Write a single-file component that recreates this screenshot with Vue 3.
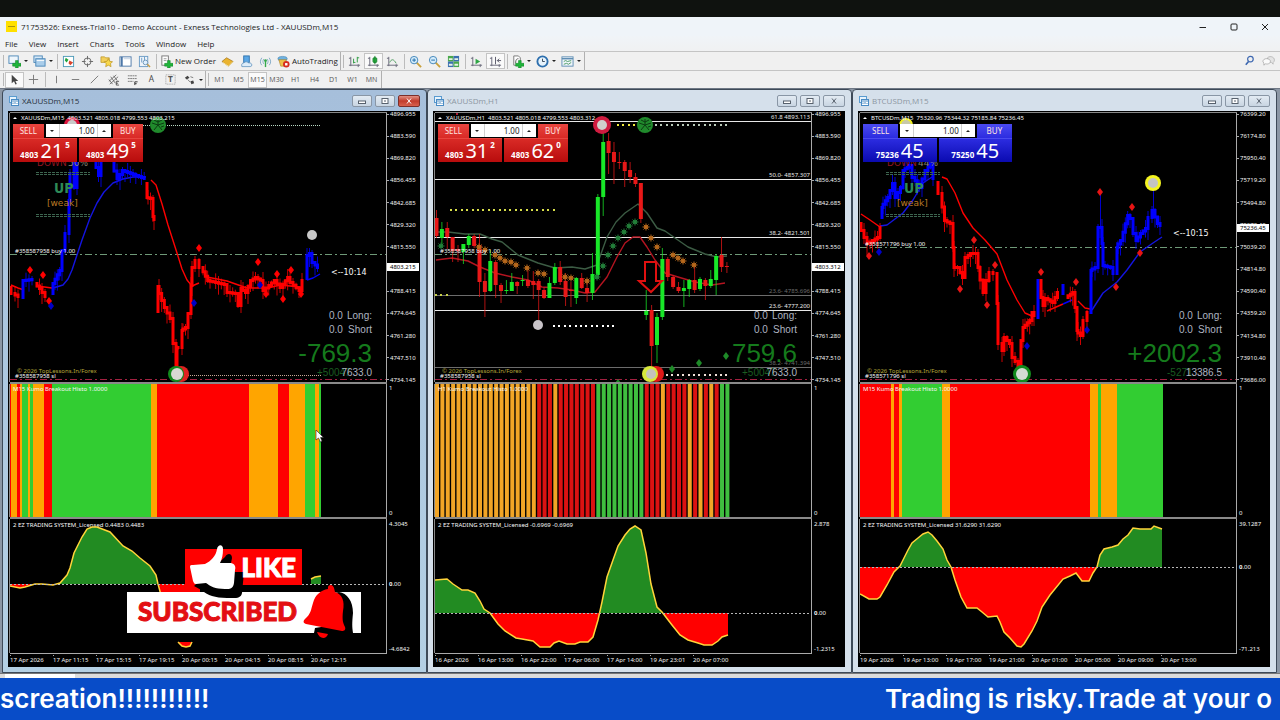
<template>
  <div class="desktop">
    <div class="letterbox"></div>

    <!-- application frame -->
    <header class="title-bar">
      <span class="app-icon"><i></i></span>
      <h1 class="app-title">71753526: Exness-Trial10 - Demo Account - Exness Technologies Ltd - XAUUSDm,M15</h1>
      <div class="frame-controls">
        <button aria-label="Minimize"><svg viewBox="0 0 10 10"><path d="M1.5 5.5H8" /></svg></button>
        <button aria-label="Maximize"><svg viewBox="0 0 10 10"><rect x="2" y="2" width="6" height="6" rx="1" /></svg></button>
        <button aria-label="Close"><svg viewBox="0 0 10 10"><path d="M2 2L8 8M8 2L2 8" /></svg></button>
      </div>
    </header>

    <nav class="menu-bar">
      <button v-for="item in menus" :key="item">{{ item }}</button>
    </nav>

    <div class="toolbar-row">
      <div v-for="(group, g) in mainTools" :key="g" class="toolbar">
        <template v-for="(tool, t) in group" :key="t">
          <i v-if="tool === '|'" class="divider"></i>
          <button
            v-else
            class="tool"
            :class="{ pressed: tool.pressed, drop: tool.drop, wide: tool.text }"
            :aria-label="tool.text || tool.icon"
          >
            <svg viewBox="0 0 14 14" v-html="icons[tool.icon]"></svg>
            <span v-if="tool.text">{{ tool.text }}</span>
            <i v-if="tool.drop" class="caret"></i>
          </button>
        </template>
      </div>
      <div class="toolbar-end">
        <button class="tool" aria-label="Search"><svg viewBox="0 0 14 14" v-html="icons.search"></svg></button>
        <button class="tool" aria-label="Chat"><svg viewBox="0 0 14 14" v-html="icons.chat"></svg></button>
      </div>
    </div>

    <div class="toolbar-row second">
      <div class="toolbar">
        <template v-for="(tool, t) in lineTools" :key="t">
          <i v-if="tool === '|'" class="divider"></i>
          <button v-else class="tool" :class="{ pressed: tool.pressed, drop: tool.drop }" :aria-label="tool.icon">
            <svg viewBox="0 0 14 14" v-html="icons[tool.icon]"></svg>
            <i v-if="tool.drop" class="caret"></i>
          </button>
        </template>
      </div>
      <div class="toolbar">
        <button v-for="p in periods" :key="p" class="tool period" :class="{ pressed: p === 'M15' }">{{ p }}</button>
      </div>
    </div>

    <!-- chart windows -->
    <main class="workspace">
      <section v-for="w in charts" :key="w.id" class="mdi" :class="{ active: w.active }">
        <div class="mdi-title">
          <svg class="mdi-icon" viewBox="0 0 10 10">
            <rect x="0.5" y="0.5" width="7" height="6" fill="#e8f4fd" stroke="#5a9bd0" />
            <rect x="2.5" y="3.5" width="7" height="6" fill="#fff" stroke="#4a8bc4" />
            <path d="M3 5H9M4 8V6.500M6 8V6M8 8V7" stroke="#4a8bc4" fill="none" />
          </svg>
          <h2>{{ w.symbol }},{{ w.period }}</h2>
          <div class="mdi-controls">
            <button aria-label="Minimize"><svg viewBox="0 0 10 8"><rect x="1.5" y="4" width="7" height="2.500" /></svg></button>
            <button aria-label="Restore"><svg viewBox="0 0 10 8"><rect x="2" y="1.500" width="6" height="5" /><path d="M4 4H6" /></svg></button>
            <button class="close" aria-label="Close"><svg viewBox="0 0 10 8"><path d="M3 1.500L7 6.500M7 1.500L3 6.500" /></svg></button>
          </div>
        </div>

        <div class="chart">
          <div class="plot price-plot">
            <svg class="canvas">
              <template v-if="w.levels">
                <g v-for="(l, i) in w.levels" :key="'l' + i">
                  <line x1="0" x2="100%" :y1="l.y" :y2="l.y" :stroke="l.color" />
                  <text x="375" :y="l.y - 2" text-anchor="end" :fill="l.color">{{ l.text }}</text>
                </g>
              </template>
              <line x1="0" x2="100%" :y1="w.buyY" :y2="w.buyY" stroke="#6f9a78" stroke-dasharray="7 3 2 3" />
              <line x1="0" x2="100%" y1="266" y2="266" stroke="#a32040" stroke-dasharray="7 3 2 3" />
              <line
                v-for="(d, i) in w.dots"
                :key="'d' + i"
                :x1="d.from" :x2="d.to" :y1="d.y" :y2="d.y"
                :stroke="d.color" :stroke-width="d.dash === '1 1' ? 1 : 2" :stroke-dasharray="d.dash"
              />

              <path
                v-for="(m, i) in w.averages" :key="'m' + i"
                :d="'M' + m.pts" :stroke="m.color" stroke-width="1.400" fill="none" stroke-linejoin="round"
              />

              <!-- M15 bars are traced from the price path -->
              <g v-for="(b, i) in w.bars" :key="'b' + i" :stroke="b.color">
                <path :d="b.wicks" opacity="0.8" />
                <path :d="b.bodies" stroke-width="3" />
              </g>

              <g v-for="(c, i) in w.candles" :key="'c' + i" :fill="c.color">
                <rect :x="c.x" :y="c.high" width="1" :height="c.low - c.high" opacity="0.75" />
                <rect :x="c.x - 1.500" :y="c.top" width="4" :height="Math.max(c.bottom - c.top, 1)" />
              </g>

              <g v-for="(f, i) in w.flowers" :key="'f' + i" :transform="`translate(${f.x} ${f.y})`" :stroke="f.color" fill="none">
                <circle r="1.500" />
                <path d="M0-3.500V3.500M-3.500 0H3.500M-2.500-2.500L2.500 2.500M2.500-2.500L-2.500 2.500" />
              </g>

              <path
                v-for="(a, i) in w.marks" :key="'a' + i"
                :d="`M${a.x} ${a.y - 4}l3 4l-3 4l-3 -4z`" :fill="a.color"
              />
              <path v-if="w.arrow" :d="w.arrow" fill="none" stroke="#e01010" stroke-width="2" />

              <g v-for="(o, i) in w.rings" :key="'o' + i">
                <circle :cx="o.x" :cy="o.y" :r="o.r" :fill="o.color" />
                <g v-if="o.star" stroke="#0c3c12" fill="none" :transform="`translate(${o.x} ${o.y})`">
                  <path d="M0 0V-6M0 0L6-2M0 0L4 5M0 0L-4 5M0 0L-6-2M-4-5L0-3L4-5M6 1L3 2" />
                </g>
              </g>

              <path d="M3 6H7L5 4Z" fill="#fff" />
              <text x="11" y="7">{{ w.symbol }},{{ w.period }}&nbsp; {{ w.ohlc }}</text>
              <text x="5" :y="w.buyY - 1">#{{ w.ticket }} buy 1.00</text>
              <text x="7" y="260" fill="#b7a93a">© 2026 TopLessons.In/Forex</text>
              <text x="5" y="265">#{{ w.ticket }} sl</text>

              <template v-if="w.trend">
                <text class="verdana" x="27" y="53" fill="#8f1520">DOWN</text>
                <text class="verdana" x="58" y="53" fill="#8c8470">{{ w.trend }}</text>
                <line v-for="y in [59, 61, 101, 103]" :key="y" x1="26" x2="80" :y1="y" :y2="y" stroke="#3d6650" stroke-dasharray="3 1" />
                <text class="up" x="44" y="80">UP</text>
                <text class="verdana" x="37" y="93" fill="#bd7b25">[weak]</text>
              </template>
              <text v-if="w.timer" class="timer" :x="w.timer.x" :y="w.timer.y">{{ w.timer.text }}</text>

              <text class="stat" x="319" y="206">0.0</text>
              <text class="stat" x="362" y="206" text-anchor="end">Long:</text>
              <text class="stat" x="319" y="220">0.0</text>
              <text class="stat" x="362" y="220" text-anchor="end">Short</text>
              <text class="profit" x="362" y="249" text-anchor="end">{{ w.profit }}</text>
              <text class="stat swap" x="307" y="263">{{ w.swap }}</text>
              <text class="stat" x="362" y="263" text-anchor="end">{{ w.total }}</text>
            </svg>

            <div class="trade-panel" :class="{ blue: w.blue }">
              <div class="trade-top">
                <button class="side">SELL</button>
                <div class="volume">
                  <button aria-label="Less"><i class="caret"></i></button>
                  <input :aria-label="w.symbol + ' volume'" value="1.00" />
                  <button aria-label="More"><i class="caret flip"></i></button>
                </div>
                <button class="side">BUY</button>
              </div>
              <div class="trade-prices">
                <button v-for="q in w.quotes" :key="q[0] + q[1]" class="quote">
                  <b>{{ q[0] }}</b><span>{{ q[1] }}</span><sup v-if="q[2]">{{ q[2] }}</sup>
                </button>
              </div>
            </div>
          </div>
          <div class="scale price-scale">
            <span v-for="p in w.scale" :key="p" class="tick">{{ p }}</span>
            <span class="last" :class="{ high: w.blue }">{{ w.last }}</span>
          </div>

          <div class="plot histo">
            <svg class="canvas">
              <rect v-for="(s, i) in w.histo" :key="i" :x="s.x" y="0" :width="s.w" height="133" :fill="s.color" />
              <text x="3" y="7">{{ w.period }} Kumo Breakout Histo 1.0000</text>
            </svg>
          </div>
          <div class="scale">
            <span>1</span>
            <span>0</span>
          </div>

          <div class="plot osc">
            <svg class="canvas">
              <clipPath :id="'up-' + w.id"><rect x="0" y="0" width="376" :height="w.zero" /></clipPath>
              <clipPath :id="'down-' + w.id"><rect x="0" :y="w.zero" width="376" height="134" /></clipPath>
              <text x="3" y="8">2 EZ TRADING SYSTEM_Licensed {{ w.osc }} {{ w.osc }}</text>
              <g v-for="(a, i) in w.areas" :key="i">
                <path :d="a.fill" fill="#228b22" :clip-path="`url(#up-${w.id})`" />
                <path :d="a.fill" fill="#ff0000" :clip-path="`url(#down-${w.id})`" />
                <path :d="a.line" fill="none" stroke="#ffd43a" stroke-width="1.500" />
              </g>
              <line x1="0" x2="100%" :y1="w.zero" :y2="w.zero" stroke="#b8b8b8" stroke-dasharray="2 2" />
            </svg>
          </div>
          <svg class="osc-scale">
            <text x="2" y="7">{{ w.oscMax }}</text>
            <text x="2" :y="w.zero + 2"><tspan font-weight="bold">0</tspan>.00</text>
            <text x="2" y="132">{{ w.oscMin }}</text>
          </svg>

          <div class="time-scale">
            <time v-for="d in w.dates" :key="d">{{ d }}</time>
          </div>
        </div>
      </section>

      <div class="promo">
        <svg class="promo-art" viewBox="0 0 234 96">
          <rect x="58" y="4" width="117" height="36" fill="#f00" />
          <rect x="0" y="47" width="234" height="41" fill="#fff" />
          <path d="M98 12C101 7 105 9 105 13L104 18L108 27H117L115 48C114 54 108 53 100 53C88 53 80 50 76 46L67 41Z" fill="#000" />
          <path d="M63 22C63 20 64 20 66 20L78 19C84 16 89 11 90 4C91-1 96-1 96 4C96 10 95 14 93 18L104 18C108 19 109 22 108 25L107 38C106 44 103 44 98 44C88 44 83 41 79 38L69 39C67 39 67 38 66 36Z" fill="#fff" />
          <path d="M206 48L212 47C220 48 226 56 226 68C225 78 225 82 226 88H210C206 93 199 92 196 89L187 88L188 83L206 80Z" fill="#000" />
          <path d="M201 44C200 39 206 39 207 43L208 47C215 49 218 56 216 66C215 75 216 78 218 82C219 85 217 86 215 86L179 79C176 78 176 76 178 74C184 69 184 64 186 58C188 50 194 45 201 44Z" fill="#f00" />
          <path d="M190 87L201 89C199 95 192 94 190 87Z" fill="#f00" />
        </svg>
        <div class="like">LIKE</div>
        <div class="subscribed">SUBSCRIBED</div>
      </div>
      <svg class="pointer" viewBox="0 0 10 14"><path d="M1 1V11L3.500 9L5.500 13L7 12L5.500 8.500H8.500Z" fill="#fff" stroke="#222" stroke-width="0.600" /></svg>
    </main>

    <div class="tab-strip"><i></i></div>
    <footer class="ticker">
      <p>screation!!!!!!!!!!!</p>
      <p class="incoming">Trading is risky.Trade at your o</p>
    </footer>
  </div>
</template>

<script setup>
const RED = '#ff0000'
const ORANGE = '#ffa500'
const GREEN = '#32cd32'
const BLUE = '#0000ff'

const menus = ['File', 'View', 'Insert', 'Charts', 'Tools', 'Window', 'Help']
const periods = ['M1', 'M5', 'M15', 'M30', 'H1', 'H4', 'D1', 'W1', 'MN']

const plus = '<path d="M8 6h3v3h3v3h-3v2H8v-2H5V9h3z" fill="#1fb53a" stroke="#0c7a20" stroke-width=".5"/>'
const axes = '<path d="M3 2v10M1 11h12M1 3.500h2M11 10v3" stroke="#667" fill="none"/>'

const icons = {
  newChart: '<rect x="1" y="1" width="10" height="8" fill="#eef6fc" stroke="#4d88b8"/>' + plus,
  profiles: '<rect x="1" y="1" width="9" height="7" fill="#d6e9f8" stroke="#4d88b8"/><rect x="3" y="4" width="10" height="8" fill="#a9cdea" stroke="#4d88b8"/><path d="M4 6h8" stroke="#fff"/>',
  market: '<rect x="1.500" y="1.500" width="11" height="11" fill="#fff" stroke="#4d9ab8"/><path d="M4 3l3 2-2 3-2-2z" fill="#23a33b"/><path d="M8 6l4 2-3 3-2-2z" fill="#d8452d"/>',
  data: '<circle cx="7" cy="7" r="3.800" fill="none" stroke="#666"/><path d="M7 1v4M7 9v4M1 7h4M9 7h4" stroke="#666"/>',
  navigator: '<path d="M1 2h4l1 1h4v5H1z" fill="#f2cf5b" stroke="#b58d1c" stroke-width=".7"/><path d="M9 4l1.500 2.800 3 .4-2.200 2.200.6 3.200L9 11l-2.900 1.600.6-3.200-2.200-2.200 3-.4z" fill="#f8d84b" stroke="#b58d1c" stroke-width=".7"/>',
  terminal: '<rect x="1" y="2" width="12" height="10" fill="#fff" stroke="#4d78a8"/><path d="M3 2v10" stroke="#4d78a8" stroke-width="2"/><path d="M5 4h7" stroke="#c0cde0"/>',
  tester: '<rect x="1.500" y="1.500" width="9" height="11" fill="#eef4fa" stroke="#6b9bc5"/><path d="M4 3v5M7 2v4" stroke="#6b9bc5"/><circle cx="8" cy="8" r="2.500" fill="#dff0ff" stroke="#6b93b5"/><path d="M10 10l3 3" stroke="#c49a45" stroke-width="1.500"/>',
  order: '<rect x="2" y="1" width="7" height="10" fill="#fff" stroke="#777"/><path d="M4 4h3M4 6h3" stroke="#999"/>' + plus,
  editor: '<path d="M1 7l5-4 7 4-5 5z" fill="#eab32f" stroke="#9a6a12" stroke-width=".7"/><path d="M2 8l6 4 5-5" fill="none" stroke="#fbe7a0"/>',
  cloud: '<rect x="4" y="1" width="6" height="7" fill="#5aa7e6" stroke="#2f73ad"/><path d="M2 12.500c-1-3 1-4 2-4 2-2 5-1 5 0 4-1 5 4 2 4z" fill="#dcecf9" stroke="#5a8ebb" stroke-width=".8"/>',
  signals: '<path d="M3 3c-2 3-2 6 0 8M11 3c2 3 2 6 0 8M5 4.500c-1 2-1 3 0 5M9 4.500c1 2 1 3 0 5" fill="none" stroke="#7fa9c6"/><path d="M7 6v7" stroke="#35a84a" stroke-width="1.500"/><circle cx="7" cy="6" r="1.500" fill="#35a84a"/>',
  auto: '<ellipse cx="6" cy="4" rx="5" ry="2.500" fill="#6eb1e0" stroke="#3a7cac" stroke-width=".6"/><path d="M2 5h8l-2 7H4z" fill="#eec04a" stroke="#a67c1b" stroke-width=".6"/><circle cx="10" cy="10" r="3.500" fill="#d62b1f"/><rect x="8.700" y="8.700" width="2.600" height="2.600" fill="#fff"/>',
  bars: axes + '<path d="M6 4v5M8 8h-2M10 2v6M10 3h2" stroke="#2b9a40" fill="none"/>',
  candles: axes + '<rect x="6.500" y="3" width="4" height="5" rx="1" fill="#2dbb45" stroke="#15802a"/><path d="M8.500 1v9" stroke="#15802a"/>',
  line: axes + '<path d="M4 8c2-4 4-4 7 1" stroke="#4b9a5b" fill="none"/>',
  zoomIn: '<path d="M8 8l5 5" stroke="#c9a13b" stroke-width="2"/><circle cx="5.500" cy="5.500" r="4" fill="#d4ecfb" stroke="#3f83b8"/><path d="M3.500 5.500h4M5.500 3.500v4" stroke="#1c6aa8"/>',
  zoomOut: '<path d="M8 8l5 5" stroke="#c9a13b" stroke-width="2"/><circle cx="5.500" cy="5.500" r="4" fill="#d4ecfb" stroke="#3f83b8"/><path d="M3.500 5.500h4" stroke="#1c6aa8"/>',
  tile: '<rect x="1" y="1" width="6" height="6" fill="#49a84c"/><rect x="7" y="1" width="6" height="6" fill="#3a6fb0"/><rect x="1" y="7" width="6" height="6" fill="#3a6fb0"/><rect x="7" y="7" width="6" height="6" fill="#49a84c"/><path d="M2 4.500h4M8 4.500h4M2 10.500h4M8 10.500h4" stroke="#e6f2e6" stroke-width="2"/>',
  scroll: axes + '<path d="M6 4l5 3-5 3z" fill="#2fa545"/>',
  shift: axes + '<path d="M7 2v8M13 6H9l2-2M9 6l2 2" stroke="#556" fill="none"/>',
  indicators: '<path d="M3 1h5l2 2v8H3z" fill="#fff" stroke="#777"/><path d="M5 9c0-4 1-5 3-5" stroke="#555" fill="none"/>' + plus,
  clock: '<circle cx="7" cy="7" r="5.500" fill="#e7f3fc" stroke="#2d6fae" stroke-width="2"/><path d="M7 4v3h2.500" stroke="#345" fill="none"/>',
  template: '<rect x="1" y="2" width="12" height="10" fill="#eef5fa" stroke="#5f8db3"/><path d="M1 4h12" stroke="#5f8db3" stroke-width="1.500"/><path d="M3 7l2-1 2 1 4-1M3 10l3-1 2 1 3-2" stroke="#4a9a62" fill="none"/>',
  cursor: '<path d="M4 2v9l2.500-2 1.500 3.500 1.500-.7L8 8.500h3z" fill="#444"/>',
  cross: '<path d="M7 2v10M2 7h10" stroke="#777"/>',
  vline: '<path d="M7 3v8" stroke="#777"/>',
  hline: '<path d="M3 7h8" stroke="#777"/>',
  trend: '<path d="M3 11l8-8" stroke="#777"/>',
  channel: '<path d="M2 9l8-7M3 12l9-8M4 4l5 7M2 7l4 5M7 3l4 5" stroke="#555" fill="none" stroke-width=".8"/><path d="M10 9h3M10 11h2M10 13h3M10 9v4" stroke="#333" fill="none" stroke-width=".8"/>',
  fibo: '<path d="M2 3h10M2 6h10M2 9h6" stroke="#777" stroke-dasharray="2 .5"/><path d="M9.500 13V9.500h3M9.500 11.500h2" stroke="#333" fill="none"/>',
  text: '<text x="7" y="10" text-anchor="middle" font-size="9" fill="#444">A</text>',
  label: '<rect x="2" y="2" width="10" height="10" fill="none" stroke="#999" stroke-dasharray="1 1"/><text x="7" y="10" text-anchor="middle" font-size="9" font-weight="bold" fill="#555">T</text>',
  arrows: '<path d="M2 5l3-2 2 2-3 2zM8 9l3-1 1 3-3 1z" fill="#444"/><path d="M5 7l3 3M8 4l3 1" stroke="#777"/>',
  search: '<circle cx="8" cy="5.500" r="3" fill="none" stroke="#3d67b0" stroke-width="1.300"/><path d="M6 8l-3 3.500" stroke="#3d67b0" stroke-width="1.800"/>',
  chat: '<path d="M6 4c3-3 9 0 7 4l-1 1 0 2-2-2c-3 0-5-2-4-5z" fill="#e4e4e4" stroke="#a8a8a8" stroke-width=".7"/><path d="M1 8c0-4 8-4 8 0 0 3-4 3-5 2.500l-2 1.500v-2z" fill="#fafafa" stroke="#999" stroke-width=".7"/>'
}

const mainTools = [
  [
    { icon: 'newChart', drop: true }, { icon: 'profiles', drop: true }, '|',
    { icon: 'market' }, { icon: 'data' }, { icon: 'navigator' }, { icon: 'terminal' }, { icon: 'tester' }, '|',
    { icon: 'order', text: 'New Order' }, { icon: 'editor' }, { icon: 'cloud' }, { icon: 'signals' },
    { icon: 'auto', text: 'AutoTrading' }
  ],
  [
    { icon: 'bars' }, { icon: 'candles', pressed: true }, { icon: 'line' }, '|',
    { icon: 'zoomIn' }, { icon: 'zoomOut' }, { icon: 'tile' }, '|',
    { icon: 'scroll' }, { icon: 'shift', pressed: true }, '|',
    { icon: 'indicators', drop: true }, { icon: 'clock', drop: true }, { icon: 'template', drop: true }
  ]
]

const lineTools = [
  { icon: 'cursor', pressed: true }, { icon: 'cross' }, '|',
  { icon: 'vline' }, { icon: 'hline' }, { icon: 'trend' }, { icon: 'channel' }, { icon: 'fibo' },
  { icon: 'text' }, { icon: 'label' }, { icon: 'arrows', drop: true }
]

const parse = (str) => str.trim().split(/\s+/).map((p) => p.split(',').map(Number))

// price path -> connected bar bodies and wicks
const trace = (color, str) => {
  const pts = parse(str)
  let bodies = ''
  let wicks = ''
  let n = 0
  for (let i = 0; i < pts.length - 1; i++) {
    const [x0, y0] = pts[i]
    const [x1, y1] = pts[i + 1]
    const steps = Math.max(1, Math.round((x1 - x0) / 2.7))
    for (let s = 0; s < steps; s++) {
      const x = x0 + ((x1 - x0) * s) / steps
      const a = y0 + ((y1 - y0) * s) / steps
      const b = y0 + ((y1 - y0) * (s + 1)) / steps
      const top = Math.min(a, b)
      const bottom = Math.max(a, b)
      bodies += `M${x} ${top - 1}V${bottom + 2}`
      wicks += `M${x} ${top - ((n * 7) % 9)}V${bottom + 2 + ((n * 5) % 11)}`
      n++
    }
  }
  return { color, bodies, wicks }
}

const marks = (color, str) => parse(str).map(([x, y]) => ({ color, x, y }))

const segments = (list) => {
  let x = 0
  return list.map(([end, color]) => {
    const seg = { x, w: end - x, color }
    x = end
    return seg
  })
}

const area = (zero, str) => {
  const pts = parse(str)
  const line = 'M' + pts.map((p) => p.join(' ')).join('L')
  return { line, fill: `${line}V${zero}H${pts[0][0]}Z` }
}

const slot = (i) => 1 + (i * 484) / 90

// slot, high, body top, body bottom, low, direction
const h1Candles = [
  [0, 97, 105, 123, 125, 0], [1, 109, 116, 125, 134, 1], [2, 109, 115, 124, 136, 0], [3, 124, 124, 138, 149, 0],
  [4, 132, 136, 138, 149, 0], [5, 131, 131, 139, 151, 1], [6, 121, 123, 132, 135, 1], [7, 121, 123, 133, 135, 0],
  [8, 121, 132, 169, 184, 0], [9, 160, 168, 179, 204, 0], [10, 137, 148, 178, 179, 1], [11, 147, 149, 172, 185, 0],
  [12, 170, 172, 178, 190, 0], [13, 167, 177, 178, 181, 1], [14, 160, 169, 178, 178, 1], [15, 168, 169, 173, 181, 0],
  [16, 162, 167, 168, 173, 1], [17, 157, 167, 173, 175, 0], [18, 158, 168, 172, 186, 0], [19, 166, 168, 177, 207, 0],
  [20, 174, 177, 185, 186, 0], [21, 164, 170, 185, 185, 1], [22, 150, 154, 170, 172, 1], [23, 148, 154, 169, 172, 0],
  [24, 160, 168, 184, 193, 0], [25, 169, 177, 178, 194, 0], [26, 164, 165, 185, 191, 1], [27, 160, 165, 175, 176, 0],
  [28, 170, 175, 180, 189, 0], [29, 140, 161, 180, 187, 1], [30, 81, 84, 162, 164, 1], [31, 20, 29, 84, 103, 1],
  [32, 20, 28, 40, 61, 0], [33, 29, 39, 49, 71, 0], [34, 39, 49, 50, 56, 0], [35, 47, 49, 58, 74, 0],
  [36, 49, 57, 64, 70, 0], [37, 60, 64, 71, 74, 0], [38, 70, 70, 106, 110, 0], [39, 177, 198, 202, 207, 1],
  [40, 192, 197, 233, 255, 0], [41, 200, 204, 232, 250, 1], [42, 135, 146, 204, 207, 1], [43, 144, 146, 164, 168, 0],
  [44, 162, 164, 174, 176, 0], [45, 169, 174, 178, 180, 0], [46, 167, 175, 178, 194, 1], [47, 166, 167, 176, 184, 1],
  [48, 154, 167, 177, 180, 0], [49, 164, 166, 176, 178, 1], [50, 165, 167, 173, 187, 0], [51, 157, 166, 173, 175, 1],
  [52, 141, 143, 167, 182, 1], [53, 124, 142, 154, 159, 0], [54, 149, 153, 154, 160, 0]
].map(([i, high, top, bottom, low, up]) => ({
  x: slot(i), high, top, bottom, low, color: up ? '#18e828' : '#e81818'
}))

const h1Histo = ('O'.repeat(19) + 'RRRORRRRRRRGGGGGGGGGRRRORRRRORORORGGG')
  .slice(0, 55)
  .split('')
  .map((k, i) => ({
    x: Math.max(0, slot(i) - 1),
    w: 4,
    color: { O: '#f2a526', R: '#db1212', G: '#3fbf3f' }[k]
  }))

const goldScale = [
  '4896.955', '4883.590', '4869.820', '4856.455', '4842.685', '4829.320', '4815.550',
  '4801.780', '4788.415', '4774.645', '4761.280', '4747.510', '4734.145'
]

const charts = [
  {
    id: 'gold-m15',
    active: true,
    symbol: 'XAUUSDm',
    period: 'M15',
    ohlc: '4803.521 4805.018 4799.553 4803.215',
    ticket: '358587958',
    buyY: 141,
    trend: '50%',
    timer: { x: 321, y: 162, text: '<--10:14' },
    profit: '-769.3',
    swap: '+50047',
    total: '7633.0',
    quotes: [['4803', '21', '5'], ['4803', '49', '5']],
    scale: goldScale,
    last: '4803.215',
    dots: [
      { from: 133, to: 311, y: 12, color: '#b9d8c4', dash: '1 1' },
      { from: 176, to: 311, y: 262, color: '#c8a898', dash: '1 1' }
    ],
    averages: [
      { color: RED, pts: '1,172 8,175 14,177' },
      { color: RED, pts: '27,173 42,175' },
      { color: '#1414e0', pts: '43,175 53,172 58,166 62,157 67,142 72,127 80,105 87,90 94,79 103,70 113,66 123,64 136,64' },
      { color: RED, pts: '141,67 146,72 152,91 158,112 167,140 172,156 177,167 182,173 189,170' },
      { color: RED, pts: '197,164 217,168 237,175 258,175 270,172 290,174' },
      { color: BLUE, pts: '297,167 303,165 310,161' }
    ],
    bars: [
      trace(RED, '1,174 5,180 11,183'),
      trace(BLUE, '13,184 16,167 25,166'),
      trace(RED, '27,170 32,175 38,183'),
      trace(BLUE, '43,180 45,170 52,157 55,137 59,120 60,87 64,60 64,50 67,74 70,50'),
      trace(BLUE, '86,46 91,62 93,48'),
      trace(BLUE, '104,50 110,65 115,57 123,60 137,65'),
      trace(RED, '137,70 138,84 143,85 144,103 147,106'),
      trace(RED, '148,198 149,173 157,194 163,205 166,230 167,254 168,234 172,234 173,217 178,214 181,200 182,172 185,154 189,147 193,154 200,167 217,171 220,179 228,180 231,192 233,175 238,179 243,167 248,164 253,167 256,177 267,167 273,174 280,164 283,169 292,177 295,167'),
      trace(BLUE, '297,165 297,144 302,140 305,149 310,154')
    ],
    marks: [
      ...marks(RED, '20,157 33,162 39,188 189,135 248,149 256,181 273,186 267,161 281,157 291,181'),
      ...marks('#0000c8', '41,193 184,190 250,172')
    ],
    rings: [
      { x: 62, y: 12, r: 8, color: '#dc143c' },
      { x: 62, y: 12, r: 5, color: '#c8c8c8' },
      { x: 148, y: 12, r: 8, color: '#208a2c', star: true },
      { x: 302, y: 122, r: 5, color: '#c8c8c8' },
      { x: 171, y: 261, r: 8, color: '#e02020' },
      { x: 166, y: 261, r: 8, color: '#128a1c' },
      { x: 167, y: 261, r: 6, color: '#d8d8d4' }
    ],
    histo: segments([
      [1, RED], [7, ORANGE], [10, RED], [12, ORANGE], [18, GREEN], [20, ORANGE], [23, GREEN], [34, ORANGE],
      [42, RED], [141, GREEN], [147, ORANGE], [239, RED], [268, ORANGE], [279, RED], [295, ORANGE],
      [305, GREEN], [309, ORANGE], [311, GREEN]
    ]),
    osc: '0.4483',
    oscMax: '4.3045',
    oscMin: '-4.6842',
    zero: 65,
    areas: [
      area(65, '0,67 10,69 15,68 25,65 32,65 43,66 50,64 57,56 60,49 64,34 72,18 77,10 82,8 87,8 100,13 113,27 122,32 130,39 140,47 146,56 148,65 151,76 190,76'),
      area(123, '168,123 172,127 176,128 180,127 182,123'),
      area(65, '301,60 305,58 311,57')
    ],
    dates: ['17 Apr 2026', '17 Apr 11:15', '17 Apr 15:15', '17 Apr 19:15', '20 Apr 00:15', '20 Apr 04:15', '20 Apr 08:15', '20 Apr 12:15']
  },
  {
    id: 'gold-h1',
    symbol: 'XAUUSDm',
    period: 'H1',
    ohlc: '4803.521 4805.018 4799.553 4803.312',
    ticket: '358587958',
    buyY: 141,
    profit: '759.6',
    swap: '+50047',
    total: '7633.0',
    quotes: [['4803', '31', '2'], ['4803', '62', '0']],
    scale: goldScale,
    last: '4803.312',
    levels: [
      { y: 8, color: '#e8e8e8', text: '61.8 4893.113' },
      { y: 66, color: '#e8e8e8', text: '50.0- 4857.307' },
      { y: 124, color: '#e8e8e8', text: '38.2- 4821.501' },
      { y: 182, color: '#6c6c6c', text: '23.6- 4785.696' },
      { y: 197, color: '#e8e8e8', text: '23.6- 4777.200' },
      { y: 254, color: '#6c6c6c', text: '38.2- 4741.394' }
    ],
    dots: [
      { from: 15, to: 121, y: 97, color: '#d8e04a', dash: '2 3.400' },
      { from: 182, to: 202, y: 12, color: '#f0e83c', dash: '2 3.400' },
      { from: 220, to: 293, y: 12, color: '#b8c8b8', dash: '2 3.400' },
      { from: 118, to: 181, y: 213, color: '#ffffff', dash: '2 3.400' },
      { from: 231, to: 294, y: 262, color: '#f0e0d8', dash: '2 3.400' },
      { from: 0, to: 13, y: 182, color: '#c8d048', dash: '2 3.400' }
    ],
    averages: [
      { color: '#3c5c44', pts: '0,119 13,119 30,121 45,121 57,126 67,129 83,142 103,150 120,155 137,154 150,156 162,152 172,124 181,109 190,100 203,91 212,100 222,115 230,118 240,125 253,134 270,141 282,144 292,143' },
      { color: '#b41420', pts: '1,147 17,145 33,148 45,154 60,160 77,164 93,167 107,174 123,175 137,177 150,180 160,179 172,164 182,144 190,130 198,124 205,124 212,134 220,147 230,160 243,164 260,169 277,172 290,170' }
    ],
    candles: h1Candles,
    flowers: [
      ...marks('#b8691c', '44,134 50,137 60,142 65,145 70,148 76,149 81,152 92,155 103,160 109,161 130,164 136,165 152,168 211,114 216,125 222,134 238,142 243,145 248,148 259,152'),
      ...marks('#23803a', '162,164 168,153 173,142 178,133 183,125 189,119 194,113 200,109 6,133')
    ],
    marks: marks('#1e8a28', '291,243 264,250 237,256 183,270'),
    arrow: 'M210 149H221V168H227L216 179L204 168H210Z',
    rings: [
      { x: 22, y: 1, r: 1, color: '#e02040' },
      { x: 167, y: 12, r: 9, color: '#d01c40' },
      { x: 167, y: 12, r: 5, color: '#d0d0cc' },
      { x: 210, y: 12, r: 8, color: '#208a2c', star: true },
      { x: 103, y: 212, r: 5, color: '#c8c4c8' },
      { x: 221, y: 261, r: 8, color: '#e01818' },
      { x: 215, y: 261, r: 8, color: '#d8e83c' },
      { x: 216, y: 261, r: 5, color: '#c4c4bc' }
    ],
    histo: h1Histo,
    osc: '-0.6969',
    oscMax: '2.878',
    oscMin: '-1.2315',
    zero: 94,
    areas: [
      area(94, '0,61 12,60 18,65 27,71 33,71 40,74 45,82 49,90 55,94 63,105 70,112 81,119 87,120 98,122 105,128 115,128 119,124 124,122 132,125 140,125 145,123 153,123 158,118 163,101 167,83 172,58 178,41 183,27 190,16 195,10 200,7 206,11 211,34 216,65 222,88 227,93 237,106 245,116 253,121 263,124 269,126 277,126 283,122 287,118 293,116')
    ],
    dates: ['16 Apr 2026', '16 Apr 13:00', '16 Apr 22:00', '17 Apr 06:00', '17 Apr 14:00', '19 Apr 23:01', '20 Apr 07:00']
  },
  {
    id: 'btc-m15',
    blue: true,
    symbol: 'BTCUSDm',
    period: 'M15',
    ohlc: '75320.96 75344.32 75185.84 75236.45',
    ticket: '358571796',
    buyY: 134,
    trend: '44%',
    timer: { x: 313, y: 123, text: '<--10:15' },
    profit: '+2002.3',
    swap: '-5271',
    total: '13386.5',
    quotes: [['75236', '45'], ['75250', '45']],
    scale: [
      '76399.20', '76174.80', '75950.40', '75719.20', '75494.80', '75270.40', '75039.20',
      '74814.80', '74590.40', '74359.20', '74134.80', '73910.40', '73686.00'
    ],
    last: '75236.45',
    dots: [],
    averages: [
      { color: RED, pts: '1,101 10,107 20,114' },
      { color: '#1414e0', pts: '20,113 27,112 43,100 53,87 63,70 72,64' },
      { color: RED, pts: '82,64 87,66 95,80 103,100 113,115 125,127 137,141 147,167 157,187 165,200 172,203' },
      { color: RED, pts: '187,198 203,191' },
      { color: BLUE, pts: '203,191 212,187' },
      { color: RED, pts: '218,188 225,195 230,196' },
      { color: '#1414e0', pts: '232,197 243,180 257,169 267,157 280,139 293,130 302,124' }
    ],
    bars: [
      trace(RED, '1,110 7,124 10,130 15,127 20,124 20,114'),
      trace(BLUE, '22,104 23,94 30,84 35,70 38,84 43,74 45,57 52,52 55,64 62,74 68,57 73,50 77,65'),
      trace(RED, '78,69 82,80 87,107 93,110 94,134 95,154 100,154 105,164 108,144 113,140 118,140 120,154 126,179 129,167 133,159 137,160 138,190 142,230 144,237 147,224 152,230 155,244 161,252 163,227 165,214 172,207 174,199 177,202'),
      trace(BLUE, '178,204 179,167'),
      trace(RED, '181,167 183,184 185,192 188,185 195,189 200,179'),
      trace(BLUE, '203,172 205,180'),
      trace(RED, '208,184 215,179 217,194 218,217 223,222 227,207 230,199'),
      trace(BLUE, '231,199 232,157 238,154 240,114 242,114 243,130 245,152 253,154 257,160 258,134 263,127 270,102 273,105 276,120 278,127 283,120 288,115 292,104 295,97 300,110 302,112'),
      { color: BLUE, wicks: 'M240.500 82V114M293.500 72V104', bodies: '' }
    ],
    marks: [
      ...marks('#e81414', '9,143 100,176 114,127 127,192 135,152 181,159 216,169 256,174 280,140 240,79 272,94'),
      ...marks('#0000c8', '19,139 167,233 227,217')
    ],
    rings: [
      { x: 46, y: 12, r: 7, color: '#f0f020' },
      { x: 46, y: 12, r: 5, color: '#c8c8a8' },
      { x: 293, y: 70, r: 8, color: '#f4f420' },
      { x: 293, y: 70, r: 5, color: '#c4c4c4' },
      { x: 162, y: 261, r: 9, color: '#128a1c' },
      { x: 162, y: 261, r: 6, color: '#d4dcd4' }
    ],
    histo: segments([
      [31, RED], [34, ORANGE], [39, RED], [42, ORANGE], [82, GREEN], [90, ORANGE], [230, RED],
      [238, ORANGE], [241, GREEN], [257, ORANGE], [303, GREEN]
    ]),
    osc: '31.6290',
    oscMax: '39.1287',
    oscMin: '-71.213',
    zero: 48,
    areas: [
      area(48, '0,75 9,80 17,80 20,78 27,66 34,53 40,47 43,41 48,31 52,24 58,19 63,15 68,13 72,16 77,22 83,30 87,41 91,48 95,61 101,78 107,89 117,89 122,93 128,98 137,97 140,103 144,113 150,119 157,127 161,128 164,125 172,112 177,102 182,88 190,76 203,60 210,57 216,54 222,62 229,62 233,54 237,48 240,36 244,30 252,28 258,26 263,20 268,16 273,9 280,10 291,10 294,7 302,10')
    ],
    dates: ['19 Apr 2026', '19 Apr 13:00', '19 Apr 17:00', '19 Apr 21:00', '20 Apr 01:00', '20 Apr 05:00', '20 Apr 09:00', '20 Apr 13:00']
  }
]
</script>

<style>
body {
  margin: 0;
  background: #000;
}
</style>

<style scoped>
.desktop {
  display: flex;
  flex-direction: column;
  min-height: 100vh;
  overflow: hidden;
  background: #f0f0f0;
  color: #222;
  font-family: "Open Sans", "Noto Sans", sans-serif;
  font-size: 8px;
  line-height: 12px;
}

button {
  margin: 0;
  padding: 0;
  border: 0;
  background: none;
  color: inherit;
  font: inherit;
}

h1,
h2,
p {
  margin: 0;
  font-size: inherit;
  font-weight: normal;
}

.letterbox {
  height: 17px;
  background: #0f120f;
}

/* title and menus */
.title-bar {
  display: flex;
  align-items: center;
  height: 19px;
  padding-left: 6px;
  background: #eff4f9;
}

.app-icon {
  display: flex;
  align-items: center;
  justify-content: center;
  width: 11px;
  height: 11px;
  background: #ffe000;
}

.app-icon i {
  width: 7px;
  height: 1px;
  background: #a89410;
}

.app-title {
  margin-left: 4px;
}

.frame-controls {
  display: flex;
  margin-left: auto;
}

.frame-controls button {
  display: flex;
  align-items: center;
  justify-content: center;
  width: 31px;
}

.frame-controls svg {
  width: 10px;
  height: 10px;
  fill: none;
  stroke: #222;
}

.menu-bar {
  display: flex;
  gap: 11px;
  align-items: center;
  height: 15px;
  padding-left: 5px;
  background: linear-gradient(#f0f4f8, #f0f1f2);
}

/* toolbars */
.toolbar-row {
  display: flex;
  height: 18px;
  border-top: 1px solid #c4c4c4;
  background: #f0f0f0;
}

.toolbar-row.second {
  height: 17px;
  border-bottom: 1px solid #6f7885;
}

.toolbar {
  display: flex;
  align-items: center;
  padding-left: 5px;
  border-right: 1px solid #b0b0b0;
}

.toolbar + .toolbar {
  padding-left: 4px;
}

.toolbar::before {
  width: 1px;
  height: 13px;
  margin-left: -2px;
  margin-right: 1px;
  background: #b8b8b8;
  content: "";
}

.toolbar-end {
  display: flex;
  margin-left: auto;
  padding-right: 2px;
}

.tool {
  display: flex;
  flex: none;
  align-items: center;
  justify-content: center;
  box-sizing: border-box;
  width: 19px;
  height: 16px;
}

.tool svg {
  flex: none;
  width: 13px;
  height: 13px;
}

.tool.pressed {
  border: 1px solid #c4c4c4;
  background: #fafafa;
}

.tool.drop {
  gap: 3px;
  width: 25px;
}

.tool.wide {
  gap: 2px;
  width: auto;
  padding: 0 2px;
}

.tool.period {
  color: #555;
  font-size: 7px;
}

.divider {
  width: 1px;
  height: 15px;
  margin: 0 1px 0 2px;
  background: #bcbcbc;
}

.caret {
  border: 2px solid transparent;
  border-top: 2px solid #222;
  border-bottom: 0;
}

.caret.flip {
  transform: rotate(180deg);
}

/* windows */
.workspace {
  position: relative;
  display: grid;
  grid-template-columns: repeat(3, 1fr);
  flex: 1;
  padding: 0 3px 0 2px;
  background: #8c97a5;
}

.mdi {
  display: flex;
  flex-direction: column;
  min-width: 0;
  padding: 0 6px 5px 5px;
  border: 1px solid #3e4a58;
  border-radius: 4px 4px 0 0;
  background: #d5e0eb;
}

.mdi.active {
  background: linear-gradient(#a6bfdb, #b4d0e4);
}

.mdi-title {
  display: flex;
  align-items: center;
  height: 21px;
  color: #8c96a2;
}

.active .mdi-title {
  color: #28323e;
}

.mdi-icon {
  width: 10px;
  height: 10px;
  margin: 0 3px 0 1px;
}

.mdi-controls {
  display: flex;
  gap: 3px;
  margin-left: auto;
}

.mdi-controls button {
  display: flex;
  align-items: center;
  justify-content: center;
  box-sizing: border-box;
  width: 20px;
  height: 12px;
  border: 1px solid #8996a5;
  border-radius: 2px;
  background: linear-gradient(#e3ebf3, #c8d5e2);
}

.mdi-controls .close {
  width: 22px;
}

.mdi-controls svg {
  width: 10px;
  height: 8px;
  fill: #fff;
  stroke: #57616d;
}

.active .mdi-controls .close {
  border-color: #7c2f2a;
  background: linear-gradient(#e09084, #c23c2c 50%, #d8624e);
}

.active .close svg {
  stroke: #fff;
}

.chart {
  display: grid;
  grid-template-columns: 1fr 33px;
  grid-template-rows: 269px 133px 134px 12px;
  row-gap: 2px;
  padding: 2px 0 0 2px;
  background: #000;
  color: #f4f4f4;
  font-family: "Noto Sans", "Open Sans", sans-serif;
  font-size: 6px;
  line-height: 8px;
}

.plot {
  position: relative;
  min-width: 0;
  border-right: 1px solid #aaa;
  box-shadow: 0 2px 0 #8a8a8a, -1px 0 0 #888;
}

.price-plot {
  box-shadow: 0 2px 0 #8a8a8a, 0 -1px 0 #888, -1px 0 0 #888;
}

.plot.osc {
  box-shadow: 0 1px 0 #aaa, -1px 0 0 #888;
}

.canvas {
  display: block;
  width: 100%;
  height: 100%;
  fill: #f8f8f8;
}

.canvas line {
  shape-rendering: crispEdges;
}

.canvas .verdana {
  font-family: "DejaVu Sans", sans-serif;
  font-size: 9px;
}

.canvas .up {
  fill: #2e8b57;
  font-family: "DejaVu Sans Condensed", sans-serif;
  font-size: 14px;
  font-weight: bold;
}

.canvas .timer {
  font-family: "DejaVu Sans", sans-serif;
  font-size: 8px;
}

.canvas .stat {
  fill: #aeb4c0;
  font-family: "Liberation Sans", sans-serif;
  font-size: 10px;
}

.canvas .swap {
  fill: #1a5c20;
}

.canvas .profit {
  fill: #157a1c;
  font-family: "Liberation Sans", sans-serif;
  font-size: 26px;
}

.scale {
  position: relative;
  display: flex;
  flex-direction: column;
  justify-content: space-between;
  padding-left: 2px;
}

.price-scale {
  margin: -3px 0 -2px;
  padding-left: 0;
}

.tick {
  display: flex;
  align-items: center;
  gap: 1px;
}

.tick::before {
  width: 2px;
  height: 1px;
  background: #aaa;
  content: "";
}

.last {
  position: absolute;
  top: 153px;
  left: 0;
  padding: 0 3px;
  background: #fff;
  color: #000;
}

.last.high {
  top: 114px;
}

.osc-scale {
  width: 100%;
  height: 100%;
  fill: #f4f4f4;
}

.time-scale {
  display: grid;
  grid-column: 1 / -1;
  grid-template-columns: repeat(auto-fill, 43px);
}

.time-scale time {
  white-space: nowrap;
}

.time-scale time::before {
  display: block;
  width: 1px;
  height: 1px;
  background: #aaa;
  content: "";
}

/* one click trading */
.trade-panel {
  position: absolute;
  top: 11px;
  left: 3px;
  width: 130px;
  background: #000;
  color: #ffe4e0;
  font-family: "Noto Sans", sans-serif;
  font-size: 8px;
  --hi: #e8453f;
  --mid: #d92a26;
  --low: #b80c0c;
}

.trade-panel.blue {
  width: 149px;
  --hi: #4a4af0;
  --mid: #2c2ce0;
  --low: #0a0ab0;
}

.trade-top,
.trade-prices {
  display: flex;
  justify-content: space-between;
  gap: 2px;
}

.side {
  flex: 1;
  height: 14px;
  background: linear-gradient(var(--hi), var(--mid));
}

.volume {
  display: flex;
  align-items: center;
  width: 50%;
  height: 13px;
  background: #fff;
}

.volume button {
  display: flex;
  align-items: center;
  justify-content: center;
  width: 13px;
  height: 13px;
}

.volume input {
  flex: 1;
  box-sizing: border-box;
  min-width: 0;
  height: 13px;
  margin: 0;
  padding: 0 2px;
  border: solid #d0d0d0;
  border-width: 0 1px;
  background: #fff;
  color: #222;
  font: inherit;
  text-align: right;
}

.quote {
  display: flex;
  flex: 1;
  gap: 2px;
  align-items: baseline;
  justify-content: center;
  height: 24px;
  border-top: 1px solid var(--hi);
  background: linear-gradient(var(--mid), var(--low));
  color: #fff;
}

.quote span {
  font-size: 20px;
  line-height: 23px;
}

.quote sup {
  align-self: flex-start;
  padding-top: 2px;
  font-size: 8px;
  font-weight: bold;
}

/* stream overlay */
.promo {
  position: absolute;
  top: 456px;
  left: 127px;
  z-index: 1;
  width: 234px;
  color: #fff;
  font-family: Lato, sans-serif;
  font-size: 26px;
  font-weight: 900;
  line-height: 36px;
  -webkit-text-stroke: 1px;
}

.promo-art {
  position: absolute;
  inset: 0;
  z-index: -1;
  width: 234px;
  height: 96px;
  overflow: visible;
}

.like {
  width: 111px;
  margin: 4px 0 0 58px;
  text-align: right;
}

.subscribed {
  height: 41px;
  margin-top: 7px;
  padding-left: 11px;
  color: #e30f13;
  line-height: 39px;
}

.pointer {
  position: absolute;
  top: 340px;
  left: 315px;
  width: 10px;
  height: 14px;
}

.tab-strip {
  height: 4px;
  border-top: 1px solid #777;
  background: #dcdcdc;
}

.tab-strip i {
  display: block;
  width: 70px;
  height: 4px;
  margin-left: 5px;
  background: #fff;
}

/* news ticker */
.ticker {
  display: flex;
  align-items: center;
  justify-content: space-between;
  height: 42px;
  overflow: hidden;
  background: #084cc8;
  color: #fff;
  font-family: Inter, sans-serif;
  font-size: 26px;
  line-height: 42px;
  white-space: nowrap;
}

.ticker p {
  font-weight: 600;
}

.ticker .incoming {
  width: 395px;
}
</style>
